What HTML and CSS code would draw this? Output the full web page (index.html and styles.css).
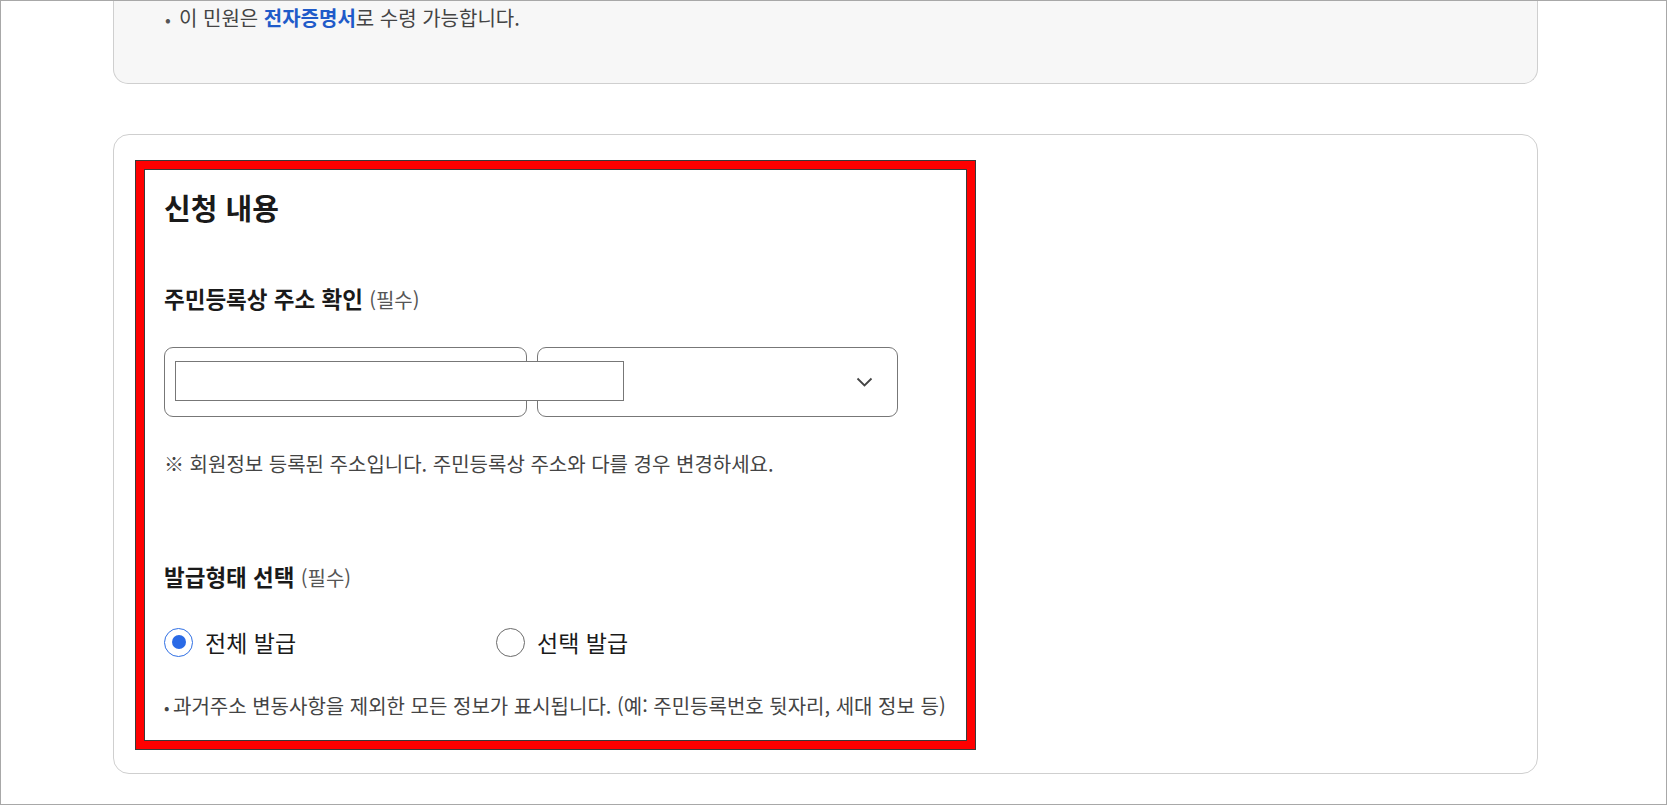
FILE: index.html
```html
<!DOCTYPE html>
<html lang="ko">
<head>
<meta charset="utf-8">
<title>신청 내용</title>
<link rel="stylesheet" href="styles.css">
</head>
<body>
<div class="frame">
  <div class="info-card">
    <p class="info-line"><span class="dot">•</span>이 민원은 <strong class="accent">전자증명서</strong>로 수령 가능합니다.</p>
  </div>

  <div class="card">
    <section class="panel">
      <h2 class="panel-title">신청 내용</h2>

      <h3 class="field-title">주민등록상 주소 확인 <span class="req">(필수)</span></h3>
      <div class="addr-row">
        <div class="addr-box">
          <input class="addr-input" type="text">
        </div>
        <div class="addr-box select-box">
          <svg class="chev" width="17" height="10" viewBox="0 0 17 10"><path d="M1.5 1.5 8.5 8.5l7-7" fill="none" stroke="#444" stroke-width="1.8"/></svg>
        </div>
      </div>
      <p class="note">※ 회원정보 등록된 주소입니다. 주민등록상 주소와 다를 경우 변경하세요.</p>

      <h3 class="field-title issue-title">발급형태 선택 <span class="req">(필수)</span></h3>
      <div class="radio-row">
        <label class="radio-item">
          <span class="radio checked"><span class="radio-dot"></span></span>
          <span class="radio-label">전체 발급</span>
        </label>
        <label class="radio-item">
          <span class="radio"></span>
          <span class="radio-label">선택 발급</span>
        </label>
      </div>
      <p class="bottom-note"><span class="small-dot">•</span>과거주소 변동사항을 제외한 모든 정보가 표시됩니다. (예: 주민등록번호 뒷자리, 세대 정보 등)</p>
    </section>
  </div>
</div>
</body>
</html>
```

FILE: styles.css
```css
* { box-sizing: border-box; }

html, body {
  margin: 0;
  padding: 0;
  background: #ffffff;
}

body {
  font-family: "Noto Sans CJK KR", "Noto Sans", sans-serif;
  color: #222;
}

.frame {
  width: 1667px;
  height: 805px;
  border: 1px solid #a8a8a8;
  padding-left: 112px;
  overflow: hidden;
}

.info-card {
  width: 1425px;
  height: 83px;
  background: #f7f7f7;
  border: 1px solid #cfcfcf;
  border-top: 0;
  border-radius: 0 0 15px 15px;
  padding: 3px 0 0 51px;
}

.info-line {
  margin: 0;
  font-size: 20px;
  line-height: 28px;
  color: #444;
}

.dot {
  display: inline-block;
  width: 14px;
  color: #555;
  font-size: 17px;
}

.accent {
  color: #1f5bc9;
  font-weight: 700;
}

.card {
  width: 1425px;
  height: 640px;
  margin-top: 50px;
  border: 1px solid #cfcfcf;
  border-radius: 16px;
  padding: 25px 0 0 21px;
}

.panel {
  width: 839px;
  height: 588px;
  margin: 1px 0 0 1px;
  border: 8px solid #ff0000;
  box-shadow: 0 0 0 1px #3a3a3a, inset 0 0 0 1px #3a3a3a;
  padding: 18px 0 0 20px;
}

.panel-title {
  margin: 0;
  font-size: 29px;
  line-height: 40px;
  font-weight: 700;
  color: #1a1a1a;
}

.field-title {
  margin: 56px 0 0;
  font-size: 22.5px;
  line-height: 30px;
  font-weight: 700;
  color: #1a1a1a;
}

.req {
  font-size: 20px;
  font-weight: 400;
  color: #555;
}

.addr-row {
  display: flex;
  gap: 10px;
  margin-top: 32px;
}

.addr-box {
  width: 363px;
  height: 70px;
  border: 1px solid #777;
  border-radius: 9px;
  padding: 13px 0 0 10px;
}

.addr-input {
  display: block;
  width: 449px;
  height: 40px;
  margin: 0;
  border: 1px solid #777;
  background: #fff;
  font: inherit;
  position: relative;
  z-index: 1;
}

.select-box {
  width: 361px;
  display: flex;
  align-items: center;
  justify-content: flex-end;
  padding: 0 24px 0 0;
}

.chev {
  display: block;
}

.note {
  margin: 33px 0 0;
  font-size: 20px;
  line-height: 28px;
  color: #444;
}

.issue-title {
  margin-top: 83px;
}

.radio-row {
  display: flex;
  margin-top: 33px;
  height: 32px;
}

.radio-item {
  display: flex;
  align-items: center;
  gap: 12px;
  width: 332px;
}

.radio {
  width: 29px;
  height: 29px;
  border: 1px solid #6b6b6b;
  border-radius: 50%;
  display: flex;
  align-items: center;
  justify-content: center;
  flex: none;
}

.radio.checked {
  border: 1.5px solid #2f6fe4;
}

.radio-dot {
  width: 14px;
  height: 14px;
  border-radius: 50%;
  background: #2a6ae6;
}

.radio-label {
  font-size: 23px;
  line-height: 32px;
  color: #1a1a1a;
}

.bottom-note {
  margin: 34px 0 0;
  font-size: 20px;
  line-height: 28px;
  color: #444;
}

.small-dot {
  display: inline-block;
  width: 9px;
  font-size: 16px;
  color: #444;
}
```
